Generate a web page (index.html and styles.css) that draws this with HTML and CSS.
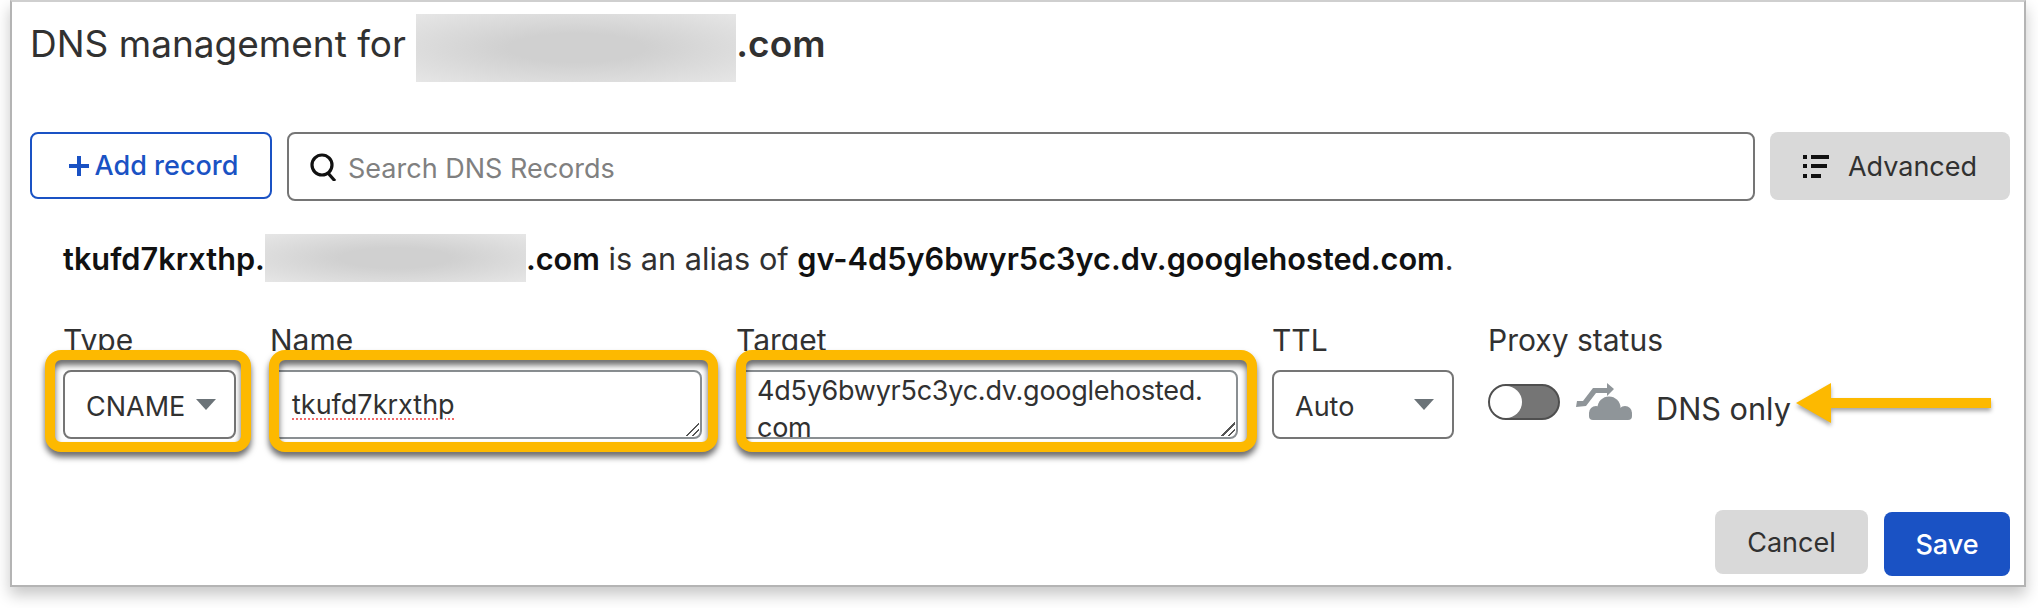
FILE: index.html
```html
<!DOCTYPE html>
<html lang="en">
<head>
    <meta charset="UTF-8">
    <title>DNS management</title>
    <link rel="stylesheet" href="styles.css">
</head>
<body>
    <div class="panel">
        <h1 class="title">DNS management for <span class="blur blur-title"></span><b>.com</b></h1>

        <div class="toolbar">
            <button class="btn btn-add">
                <svg class="plus" viewBox="0 0 20 20" fill="#1a52c4">
                    <path d="M8 0h4v8h8v4h-8v8H8v-8H0V8h8z"/>
                </svg>
                Add record
            </button>
            <div class="search">
                <svg class="search-icon" viewBox="0 0 28 28" fill="none" stroke="#111" stroke-width="3.2">
                    <circle cx="12" cy="12" r="10"/>
                    <path d="M18 20l7 8"/>
                </svg>
                <input type="text" placeholder="Search DNS Records">
            </div>
            <button class="btn btn-advanced">
                <svg class="adv-icon" viewBox="0 0 26 23" fill="#111">
                    <rect x="0" y="0" width="4" height="4"/><rect x="8" y="0" width="18" height="4"/>
                    <rect x="0" y="9" width="4" height="4"/><rect x="8" y="9" width="16" height="4"/>
                    <rect x="0" y="19" width="4" height="4"/><rect x="8" y="19" width="10" height="4"/>
                </svg>
                Advanced
            </button>
        </div>

        <p class="alias"><b>tkufd7krxthp.</b><span class="blur blur-alias"></span><b>.com</b> is an alias of <b>gv-4d5y6bwyr5c3yc.dv.googlehosted.com</b>.</p>

        <div class="fields">
            <div class="field field-type">
                <label>Type</label>
                <div class="control">
                    <div class="select">CNAME <span class="caret"></span></div>
                    <div class="highlight"></div>
                </div>
            </div>
            <div class="field field-name">
                <label>Name</label>
                <div class="control">
                    <div class="textbox"><span class="typo">tkufd7krxthp</span></div>
                    <span class="grip"></span>
                    <div class="highlight"></div>
                </div>
            </div>
            <div class="field field-target">
                <label>Target</label>
                <div class="control">
                    <div class="textbox textbox-target">4d5y6bwyr5c3yc.dv.googlehosted.<br>com</div>
                    <span class="grip"></span>
                    <div class="highlight"></div>
                </div>
            </div>
            <div class="field field-ttl">
                <label>TTL</label>
                <div class="control">
                    <div class="select">Auto <span class="caret"></span></div>
                </div>
            </div>
            <div class="field field-proxy">
                <label>Proxy status</label>
                <div class="proxy-row">
                    <span class="toggle"><span class="knob"></span></span>
                    <svg class="cloud" viewBox="0 0 60 38" fill="#8f9599">
                        <path d="M1 24l1-6h6L18 5h14V0l7 6-7 7v-3H21L11 23z"/>
                        <circle cx="34" cy="25" r="11.5"/>
                        <circle cx="21" cy="30" r="7"/>
                        <circle cx="50" cy="30" r="7"/>
                        <rect x="14" y="28" width="43" height="9" rx="4"/>
                    </svg>
                    <span class="proxy-text">DNS only</span>
                    <svg class="arrow" viewBox="0 0 200 44" fill="#fdb900">
                        <path d="M1 21L36 1v15h160v10H36v15z"/>
                    </svg>
                </div>
            </div>
        </div>

        <div class="footer">
            <button class="btn btn-cancel">Cancel</button>
            <button class="btn btn-save">Save</button>
        </div>
    </div>
</body>
</html>
```

FILE: styles.css
```css
* {
    box-sizing: border-box;
}
body {
    margin: 0;
    height: 608px;
    overflow: hidden;
    background-color: #fff;
    font-family: Inter, "Liberation Sans", sans-serif;
    color: #313131;
}
.panel {
    width: 2016px;
    height: 587px;
    margin-left: 10px;
    padding: 12px 14px 0 18px;
    background-color: #fff;
    border: 2px solid #b4b4b4;
    border-top-color: #cfcfcf;
    box-shadow: 0 8px 14px rgba(0, 0, 0, 0.22);
}
.title {
    display: flex;
    align-items: flex-start;
    height: 68px;
    margin: 0;
    font-size: 37px;
    font-weight: 400;
    line-height: 60px;
    white-space: pre;
}
.title b {
    font-weight: 600;
}
.blur {
    display: inline-block;
    background: radial-gradient(ellipse at center, #d0d0d0 30%, #e6e6e6 100%);
}
.blur-title {
    width: 320px;
    height: 68px;
}
.blur-alias {
    width: 261px;
    height: 48px;
}
.btn {
    font-family: inherit;
    border-radius: 8px;
    border: none;
    cursor: pointer;
}
.toolbar {
    display: flex;
    gap: 15px;
    align-items: flex-start;
    margin-top: 50px;
}
.btn-add {
    display: flex;
    align-items: center;
    justify-content: center;
    gap: 6px;
    width: 242px;
    height: 67px;
    padding: 0 0 0 5px;
    background-color: #fff;
    border: 2px solid #1a52c4;
    color: #1a52c4;
    font-size: 27px;
    font-weight: 500;
    white-space: nowrap;
}
.plus {
    width: 20px;
    height: 20px;
}
.search {
    display: flex;
    align-items: center;
    width: 1468px;
    height: 69px;
    padding-left: 21px;
    border: 2px solid #757575;
    border-radius: 8px;
}
.search-icon {
    width: 28px;
    height: 28px;
    margin-right: 10px;
}
.search input {
    flex: 1;
    padding: 3px 0 0;
    border: none;
    outline: none;
    font-family: inherit;
    font-size: 27px;
}
.search input::placeholder {
    color: #808080;
}
.btn-advanced {
    display: flex;
    align-items: center;
    justify-content: center;
    gap: 19px;
    width: 240px;
    height: 68px;
    background-color: #d9d9d9;
    color: #313131;
    font-size: 27px;
}
.adv-icon {
    width: 26px;
    height: 23px;
}
.alias {
    display: flex;
    align-items: center;
    height: 48px;
    margin: 33px 0 0 33px;
    font-size: 30.7px;
    white-space: pre;
}
.alias b {
    font-weight: 600;
    color: #111;
}
.fields {
    display: flex;
    margin: 41px 0 0 33px;
    gap: 34px;
}
.field label {
    display: block;
    height: 47px;
    font-size: 30px;
    line-height: 34px;
}
.control {
    position: relative;
    height: 69px;
}
.field-type { width: 173px; }
.field-name { width: 432px; }
.field-target { width: 502px; }
.field-ttl { width: 182px; }
.select {
    display: flex;
    align-items: center;
    justify-content: space-between;
    height: 69px;
    padding: 3px 18px 0 21px;
    border: 2px solid #757575;
    border-radius: 8px;
    font-size: 27px;
}
.caret {
    width: 0;
    height: 0;
    margin-top: -4px;
    border-left: 10px solid transparent;
    border-right: 10px solid transparent;
    border-top: 11px solid #6b7378;
}
.textbox {
    height: 69px;
    padding: 14px 20px;
    border: 2px solid #8a8f92;
    border-radius: 8px;
    font-size: 27px;
    line-height: 38px;
}
.textbox-target {
    padding: 0 0 0 19px;
    line-height: 37px;
    letter-spacing: -0.25px;
}
.typo {
    text-decoration: underline dotted #f26a6a 2px;
    text-underline-offset: 4px;
}
.grip {
    position: absolute;
    right: 3px;
    bottom: 3px;
    width: 14px;
    height: 14px;
    background: linear-gradient(135deg, transparent 50%, #555 50%, #555 58%, transparent 58%, transparent 74%, #555 74%, #555 82%, transparent 82%);
}
.highlight {
    position: absolute;
    top: -20px;
    bottom: -13px;
    left: -18px;
    right: -15px;
    border: 10px solid #fdb900;
    border-radius: 16px;
    filter: drop-shadow(0 5px 3px rgba(0, 0, 0, 0.6));
}
.field-name .highlight {
    left: -1px;
    right: -16px;
}
.field-target .highlight {
    left: 0;
    right: -19px;
}
.proxy-row {
    position: relative;
    display: flex;
    align-items: center;
    height: 69px;
}
.toggle {
    width: 72px;
    height: 36px;
    margin-top: -5px;
    background-color: #757575;
    border: 2px solid #4f4f4f;
    border-radius: 18px;
}
.knob {
    display: block;
    width: 32px;
    height: 32px;
    background-color: #fff;
    border-radius: 50%;
}
.cloud {
    width: 60px;
    height: 38px;
    margin: -6px 0 0 15px;
}
.proxy-text {
    margin: 7px 0 0 21px;
    font-size: 30.7px;
    white-space: nowrap;
}
.arrow {
    position: absolute;
    left: 307px;
    top: 12px;
    width: 200px;
    height: 44px;
    filter: drop-shadow(0 3px 2px rgba(0, 0, 0, 0.35));
}
.footer {
    display: flex;
    justify-content: flex-end;
    align-items: flex-start;
    gap: 16px;
    margin-top: 71px;
}
.btn-cancel {
    width: 153px;
    height: 64px;
    background-color: #d9d9d9;
    color: #313131;
    font-size: 27px;
}
.btn-save {
    width: 126px;
    height: 64px;
    margin-top: 2px;
    background-color: #1a52c4;
    color: #fff;
    font-size: 27px;
    font-weight: 500;
}
```
